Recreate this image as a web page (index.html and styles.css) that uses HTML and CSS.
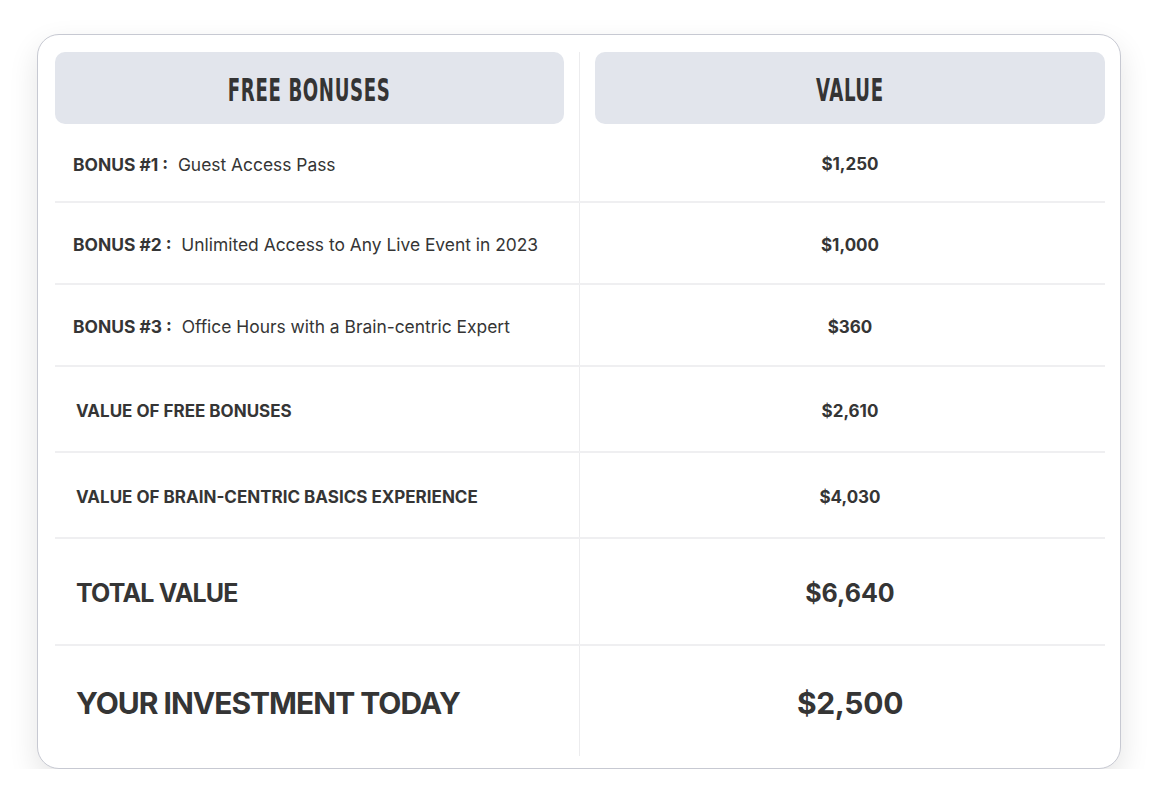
FILE: index.html
```html
<!DOCTYPE html>
<html lang="en">
<head>
<meta charset="utf-8">
<title>Free Bonuses</title>
<link rel="stylesheet" href="styles.css">
</head>
<body>
<div class="card">
  <div class="row head">
    <div class="cell left"><div class="hbox"><span class="htext">FREE BONUSES</span></div></div>
    <div class="cell right"><div class="hbox"><span class="htext">VALUE</span></div></div>
  </div>
  <div class="row r1">
    <div class="cell left"><span class="b">BONUS #1 :</span>&nbsp; Guest Access Pass</div>
    <div class="cell right val">$1,250</div>
  </div>
  <div class="row r2">
    <div class="cell left"><span class="b">BONUS #2 :</span>&nbsp; Unlimited Access to Any Live Event in 2023</div>
    <div class="cell right val">$1,000</div>
  </div>
  <div class="row r2">
    <div class="cell left"><span class="b">BONUS #3 :</span>&nbsp; Office Hours with a Brain-centric Expert</div>
    <div class="cell right val">$360</div>
  </div>
  <div class="row r4">
    <div class="cell left sum">VALUE OF FREE BONUSES</div>
    <div class="cell right val">$2,610</div>
  </div>
  <div class="row r4">
    <div class="cell left sum">VALUE OF BRAIN-CENTRIC BASICS EXPERIENCE</div>
    <div class="cell right val">$4,030</div>
  </div>
  <div class="row r6">
    <div class="cell left total">TOTAL VALUE</div>
    <div class="cell right val total-val">$6,640</div>
  </div>
  <div class="row r7">
    <div class="cell left invest">YOUR INVESTMENT TODAY</div>
    <div class="cell right val invest-val">$2,500</div>
  </div>
</div>
</body>
</html>
```
FILE: styles.css
```css
* { box-sizing: border-box; }
html, body { margin: 0; padding: 0; background: #ffffff; }
body {
  font-family: Inter, "Noto Sans", sans-serif;
  color: #353535;
  padding: 34px 38px 0 37px;
}
.card {
  width: 1084px;
  height: 735px;
  border: 1px solid #c7c9d2;
  border-radius: 22px;
  background: #fff;
  box-shadow: 0 12px 30px rgba(0, 0, 0, 0.11);
  padding: 17px 15px 12px 17px;
  display: flex;
  flex-direction: column;
}
.row {
  display: flex;
  border-bottom: 2px solid #efeff1;
}
.row.head { border-bottom: none; height: 72px; }
.row.r1 { height: 79px; }
.row.r2 { height: 82px; }
.row.r4 { height: 86px; }
.row.r6 { height: 107px; }
.row.r7 { height: 110px; border-bottom: none; }
.cell {
  min-width: 0;
  display: flex;
  align-items: center;
  padding-top: 3px;
}
.cell.left { flex: 0 0 524px; padding-left: 18px; font-size: 17.4px; }
.cell.right {
  flex: 1 1 auto;
  border-left: 1px solid #ececee;
  justify-content: center;
  padding-left: 15px;
}
.head .cell { padding-top: 0; }
.head .cell.left { padding: 0 15px 0 0; }
.head .cell.right { padding: 0 0 0 15px; }
.hbox {
  width: 100%;
  height: 72px;
  background: #e2e5ec;
  border-radius: 10px;
  display: flex;
  align-items: center;
  justify-content: center;
}
.htext {
  display: inline-block;
  font-family: "Liberation Sans Narrow", "DejaVu Sans Condensed", sans-serif;
  font-weight: 700;
  font-size: 32px;
  letter-spacing: 1px;
  color: #343434;
  transform: scaleX(0.63);
  padding-top: 3px;
}
.b { font-weight: 700; }
.cell.val { font-weight: 700; font-size: 17px; }
.cell.sum { font-weight: 700; padding-left: 21px; font-size: 17px; }
.cell.total { font-weight: 700; font-size: 25px; padding-left: 21px; letter-spacing: -0.8px; }
.cell.total-val { font-size: 25px; }
.cell.invest { font-weight: 700; font-size: 30px; padding-left: 21px; letter-spacing: -1px; }
.cell.invest-val { font-size: 30px; letter-spacing: -0.3px; }
```
